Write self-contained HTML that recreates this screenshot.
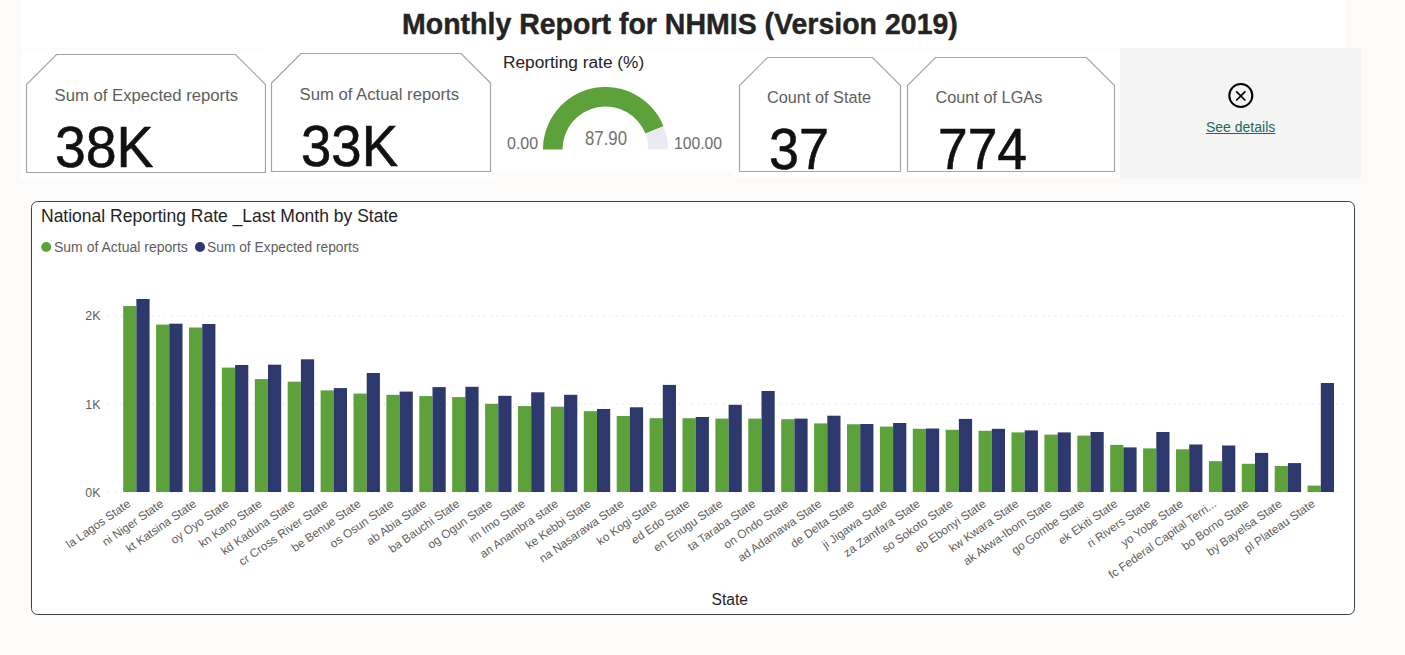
<!DOCTYPE html>
<html><head><meta charset="utf-8"><style>
html,body{margin:0;padding:0;}
body{width:1405px;height:655px;overflow:hidden;background:#fcfbfa;position:relative;font-family:"Liberation Sans",sans-serif;}
.abs{position:absolute;white-space:nowrap;}
</style></head><body>
<div class="abs" style="left:21px;top:0;width:1324px;height:48px;background:#fff"></div>
<div class="abs" style="left:21px;top:49px;width:476px;height:130px;background:#fff"></div>
<div class="abs" style="left:266px;top:48px;width:231px;height:10px;background:#fff"></div>
<div class="abs" style="left:497px;top:49px;width:236px;height:122px;background:#fff"></div>
<div class="abs" style="left:733px;top:49px;width:387px;height:129px;background:#fff"></div>
<div class="abs" style="left:1120px;top:48px;width:241px;height:130.5px;background:#f4f4f4"></div>
<div class="abs" style="left:31px;top:201.2px;width:1321.5px;height:411.8px;background:#fff;border:1px solid #404040;border-radius:6.5px"></div>
<div class="abs" id="title" style="left:402px;top:6px;font-size:28.5px;font-weight:bold;color:#252423;letter-spacing:0px;-webkit-text-stroke:0.4px #252423;transform:scaleY(1.06);transform-origin:0 0">Monthly Report for NHMIS (Version 2019)</div>
<svg class="abs" style="left:0;top:0" width="1405" height="655">
<g fill="#fff" stroke="#a3a3a8" stroke-width="1.2">
<path d="M56.5,54.5 L235.5,54.5 L265.5,84.5 L265.5,172.5 L26.5,172.5 L26.5,84.5 Z"/>
<path d="M301.0,53.5 L461.0,53.5 L490.5,83.0 L490.5,171.5 L271.5,171.5 L271.5,83.0 Z"/>
<path d="M767.5,57.5 L872.5,57.5 L900.5,85.5 L900.5,171.5 L739.5,171.5 L739.5,85.5 Z"/>
<path d="M935.5,57.5 L1086.5,57.5 L1114.5,85.5 L1114.5,171.5 L907.5,171.5 L907.5,85.5 Z"/>
</g>
<path d="M543.00,149.50 A62.5,62.5 0 0 1 663.54,126.31 L645.43,133.55 A43.0,43.0 0 0 0 562.50,149.50 Z" fill="#5ca13a"/>
<path d="M663.54,126.31 A62.5,62.5 0 0 1 668.00,149.50 L648.50,149.50 A43.0,43.0 0 0 0 645.43,133.55 Z" fill="#ebe9f4"/>
<circle cx="1240.8" cy="95.5" r="11.5" fill="none" stroke="#000" stroke-width="2.1"/>
<path d="M1236.2,91.3 L1245.4,100.5 M1245.4,91.3 L1236.2,100.5" stroke="#000" stroke-width="1.7"/>
<line x1="108" y1="315.8" x2="1344" y2="315.8" stroke="#e9e7f4" stroke-width="1.3" stroke-dasharray="1.6 4.67"/><line x1="108" y1="404.2" x2="1344" y2="404.2" stroke="#e9e7f4" stroke-width="1.3" stroke-dasharray="1.6 4.67"/><line x1="108" y1="492.4" x2="1344" y2="492.4" stroke="#e9e7f4" stroke-width="1.3" stroke-dasharray="1.6 4.67"/>
<rect x="123.20" y="306.0" width="13.2" height="186.0" fill="#5ca13a"/><rect x="136.40" y="299.0" width="13.2" height="193.0" fill="#2d386c"/><rect x="156.10" y="324.6" width="13.2" height="167.4" fill="#5ca13a"/><rect x="169.30" y="323.7" width="13.2" height="168.3" fill="#2d386c"/><rect x="189.00" y="327.5" width="13.2" height="164.5" fill="#5ca13a"/><rect x="202.20" y="324.0" width="13.2" height="168.0" fill="#2d386c"/><rect x="221.90" y="367.6" width="13.2" height="124.4" fill="#5ca13a"/><rect x="235.10" y="365.0" width="13.2" height="127.0" fill="#2d386c"/><rect x="254.80" y="379.1" width="13.2" height="112.9" fill="#5ca13a"/><rect x="268.00" y="364.7" width="13.2" height="127.3" fill="#2d386c"/><rect x="287.70" y="381.7" width="13.2" height="110.3" fill="#5ca13a"/><rect x="300.90" y="359.3" width="13.2" height="132.7" fill="#2d386c"/><rect x="320.60" y="390.4" width="13.2" height="101.6" fill="#5ca13a"/><rect x="333.80" y="388.1" width="13.2" height="103.9" fill="#2d386c"/><rect x="353.50" y="393.6" width="13.2" height="98.4" fill="#5ca13a"/><rect x="366.70" y="373.0" width="13.2" height="119.0" fill="#2d386c"/><rect x="386.40" y="394.8" width="13.2" height="97.2" fill="#5ca13a"/><rect x="399.60" y="391.6" width="13.2" height="100.4" fill="#2d386c"/><rect x="419.30" y="396.1" width="13.2" height="95.9" fill="#5ca13a"/><rect x="432.50" y="387.1" width="13.2" height="104.9" fill="#2d386c"/><rect x="452.20" y="397.1" width="13.2" height="94.9" fill="#5ca13a"/><rect x="465.40" y="386.8" width="13.2" height="105.2" fill="#2d386c"/><rect x="485.10" y="403.8" width="13.2" height="88.2" fill="#5ca13a"/><rect x="498.30" y="395.8" width="13.2" height="96.2" fill="#2d386c"/><rect x="518.00" y="406.1" width="13.2" height="85.9" fill="#5ca13a"/><rect x="531.20" y="392.3" width="13.2" height="99.7" fill="#2d386c"/><rect x="550.90" y="406.7" width="13.2" height="85.3" fill="#5ca13a"/><rect x="564.10" y="394.8" width="13.2" height="97.2" fill="#2d386c"/><rect x="583.80" y="411.2" width="13.2" height="80.8" fill="#5ca13a"/><rect x="597.00" y="409.0" width="13.2" height="83.0" fill="#2d386c"/><rect x="616.70" y="416.0" width="13.2" height="76.0" fill="#5ca13a"/><rect x="629.90" y="407.3" width="13.2" height="84.7" fill="#2d386c"/><rect x="649.60" y="418.2" width="13.2" height="73.8" fill="#5ca13a"/><rect x="662.80" y="384.9" width="13.2" height="107.1" fill="#2d386c"/><rect x="682.50" y="418.2" width="13.2" height="73.8" fill="#5ca13a"/><rect x="695.70" y="417.0" width="13.2" height="75.0" fill="#2d386c"/><rect x="715.40" y="418.6" width="13.2" height="73.4" fill="#5ca13a"/><rect x="728.60" y="404.8" width="13.2" height="87.2" fill="#2d386c"/><rect x="748.30" y="418.6" width="13.2" height="73.4" fill="#5ca13a"/><rect x="761.50" y="391.0" width="13.2" height="101.0" fill="#2d386c"/><rect x="781.20" y="419.2" width="13.2" height="72.8" fill="#5ca13a"/><rect x="794.40" y="418.6" width="13.2" height="73.4" fill="#2d386c"/><rect x="814.10" y="423.4" width="13.2" height="68.6" fill="#5ca13a"/><rect x="827.30" y="415.7" width="13.2" height="76.3" fill="#2d386c"/><rect x="847.00" y="424.3" width="13.2" height="67.7" fill="#5ca13a"/><rect x="860.20" y="424.0" width="13.2" height="68.0" fill="#2d386c"/><rect x="879.90" y="426.6" width="13.2" height="65.4" fill="#5ca13a"/><rect x="893.10" y="423.0" width="13.2" height="69.0" fill="#2d386c"/><rect x="912.80" y="428.8" width="13.2" height="63.2" fill="#5ca13a"/><rect x="926.00" y="428.5" width="13.2" height="63.5" fill="#2d386c"/><rect x="945.70" y="429.8" width="13.2" height="62.2" fill="#5ca13a"/><rect x="958.90" y="418.9" width="13.2" height="73.1" fill="#2d386c"/><rect x="978.60" y="430.8" width="13.2" height="61.2" fill="#5ca13a"/><rect x="991.80" y="428.8" width="13.2" height="63.2" fill="#2d386c"/><rect x="1011.50" y="432.4" width="13.2" height="59.6" fill="#5ca13a"/><rect x="1024.70" y="430.4" width="13.2" height="61.6" fill="#2d386c"/><rect x="1044.40" y="434.6" width="13.2" height="57.4" fill="#5ca13a"/><rect x="1057.60" y="432.4" width="13.2" height="59.6" fill="#2d386c"/><rect x="1077.30" y="435.6" width="13.2" height="56.4" fill="#5ca13a"/><rect x="1090.50" y="432.0" width="13.2" height="60.0" fill="#2d386c"/><rect x="1110.20" y="444.9" width="13.2" height="47.1" fill="#5ca13a"/><rect x="1123.40" y="447.4" width="13.2" height="44.6" fill="#2d386c"/><rect x="1143.10" y="448.4" width="13.2" height="43.6" fill="#5ca13a"/><rect x="1156.30" y="432.0" width="13.2" height="60.0" fill="#2d386c"/><rect x="1176.00" y="449.3" width="13.2" height="42.7" fill="#5ca13a"/><rect x="1189.20" y="444.5" width="13.2" height="47.5" fill="#2d386c"/><rect x="1208.90" y="461.2" width="13.2" height="30.8" fill="#5ca13a"/><rect x="1222.10" y="445.5" width="13.2" height="46.5" fill="#2d386c"/><rect x="1241.80" y="463.8" width="13.2" height="28.2" fill="#5ca13a"/><rect x="1255.00" y="452.9" width="13.2" height="39.1" fill="#2d386c"/><rect x="1274.70" y="466.0" width="13.2" height="26.0" fill="#5ca13a"/><rect x="1287.90" y="463.1" width="13.2" height="28.9" fill="#2d386c"/><rect x="1307.60" y="485.6" width="13.2" height="6.4" fill="#5ca13a"/><rect x="1320.80" y="383.0" width="13.2" height="109.0" fill="#2d386c"/>
<g font-family="Liberation Sans" font-size="11.8" fill="#605e5c">
<text x="131.40" y="505.5" text-anchor="end" transform="rotate(-35 131.40 505.5)">la Lagos State</text><text x="164.30" y="505.5" text-anchor="end" transform="rotate(-35 164.30 505.5)">ni Niger State</text><text x="197.20" y="505.5" text-anchor="end" transform="rotate(-35 197.20 505.5)">kt Katsina State</text><text x="230.10" y="505.5" text-anchor="end" transform="rotate(-35 230.10 505.5)">oy Oyo State</text><text x="263.00" y="505.5" text-anchor="end" transform="rotate(-35 263.00 505.5)">kn Kano State</text><text x="295.90" y="505.5" text-anchor="end" transform="rotate(-35 295.90 505.5)">kd Kaduna State</text><text x="328.80" y="505.5" text-anchor="end" transform="rotate(-35 328.80 505.5)">cr Cross River State</text><text x="361.70" y="505.5" text-anchor="end" transform="rotate(-35 361.70 505.5)">be Benue State</text><text x="394.60" y="505.5" text-anchor="end" transform="rotate(-35 394.60 505.5)">os Osun State</text><text x="427.50" y="505.5" text-anchor="end" transform="rotate(-35 427.50 505.5)">ab Abia State</text><text x="460.40" y="505.5" text-anchor="end" transform="rotate(-35 460.40 505.5)">ba Bauchi State</text><text x="493.30" y="505.5" text-anchor="end" transform="rotate(-35 493.30 505.5)">og Ogun State</text><text x="526.20" y="505.5" text-anchor="end" transform="rotate(-35 526.20 505.5)">im Imo State</text><text x="559.10" y="505.5" text-anchor="end" transform="rotate(-35 559.10 505.5)">an Anambra state</text><text x="592.00" y="505.5" text-anchor="end" transform="rotate(-35 592.00 505.5)">ke Kebbi State</text><text x="624.90" y="505.5" text-anchor="end" transform="rotate(-35 624.90 505.5)">na Nasarawa State</text><text x="657.80" y="505.5" text-anchor="end" transform="rotate(-35 657.80 505.5)">ko Kogi State</text><text x="690.70" y="505.5" text-anchor="end" transform="rotate(-35 690.70 505.5)">ed Edo State</text><text x="723.60" y="505.5" text-anchor="end" transform="rotate(-35 723.60 505.5)">en Enugu State</text><text x="756.50" y="505.5" text-anchor="end" transform="rotate(-35 756.50 505.5)">ta Taraba State</text><text x="789.40" y="505.5" text-anchor="end" transform="rotate(-35 789.40 505.5)">on Ondo State</text><text x="822.30" y="505.5" text-anchor="end" transform="rotate(-35 822.30 505.5)">ad Adamawa State</text><text x="855.20" y="505.5" text-anchor="end" transform="rotate(-35 855.20 505.5)">de Delta State</text><text x="888.10" y="505.5" text-anchor="end" transform="rotate(-35 888.10 505.5)">ji Jigawa State</text><text x="921.00" y="505.5" text-anchor="end" transform="rotate(-35 921.00 505.5)">za Zamfara State</text><text x="953.90" y="505.5" text-anchor="end" transform="rotate(-35 953.90 505.5)">so Sokoto State</text><text x="986.80" y="505.5" text-anchor="end" transform="rotate(-35 986.80 505.5)">eb Ebonyi State</text><text x="1019.70" y="505.5" text-anchor="end" transform="rotate(-35 1019.70 505.5)">kw Kwara State</text><text x="1052.60" y="505.5" text-anchor="end" transform="rotate(-35 1052.60 505.5)">ak Akwa-Ibom State</text><text x="1085.50" y="505.5" text-anchor="end" transform="rotate(-35 1085.50 505.5)">go Gombe State</text><text x="1118.40" y="505.5" text-anchor="end" transform="rotate(-35 1118.40 505.5)">ek Ekiti State</text><text x="1151.30" y="505.5" text-anchor="end" transform="rotate(-35 1151.30 505.5)">ri Rivers State</text><text x="1184.20" y="505.5" text-anchor="end" transform="rotate(-35 1184.20 505.5)">yo Yobe State</text><text x="1217.10" y="505.5" text-anchor="end" transform="rotate(-35 1217.10 505.5)">fc Federal Capital Terri...</text><text x="1250.00" y="505.5" text-anchor="end" transform="rotate(-35 1250.00 505.5)">bo Borno State</text><text x="1282.90" y="505.5" text-anchor="end" transform="rotate(-35 1282.90 505.5)">by Bayelsa State</text><text x="1315.80" y="505.5" text-anchor="end" transform="rotate(-35 1315.80 505.5)">pl Plateau State</text>
</g>
<g font-family="Liberation Sans" font-size="12.4" fill="#605e5c" text-anchor="end">
<text x="100.5" y="320.2">2K</text>
<text x="100.5" y="408.6">1K</text>
<text x="100.5" y="496.8">0K</text>
</g>
<circle cx="46.2" cy="247" r="5" fill="#5ca13a"/>
<circle cx="200" cy="247" r="5" fill="#2d386c"/>
</svg>
<div class="abs" style="left:54.5px;top:86px;font-size:16.7px;color:#605e5c">Sum of Expected reports</div>
<div class="abs" style="left:299.5px;top:85px;font-size:16.7px;color:#605e5c">Sum of Actual reports</div>
<div class="abs" style="left:767px;top:88px;font-size:16.3px;color:#605e5c">Count of State</div>
<div class="abs" style="left:935.5px;top:88px;font-size:16.3px;color:#605e5c">Count of LGAs</div>
<div class="abs" style="left:55px;top:113.3px;font-size:58px;color:#111;-webkit-text-stroke:0.6px #111;transform:scaleX(0.955);transform-origin:0 0">38K</div>
<div class="abs" style="left:300.5px;top:112.3px;font-size:58px;color:#111;-webkit-text-stroke:0.6px #111;transform:scaleX(0.94);transform-origin:0 0">33K</div>
<div class="abs" style="left:768.5px;top:115.3px;font-size:58px;color:#111;-webkit-text-stroke:0.6px #111;transform:scaleX(0.93);transform-origin:0 0;height:57px;overflow:hidden">37</div>
<div class="abs" style="left:938px;top:115.3px;font-size:58px;color:#111;-webkit-text-stroke:0.6px #111;transform:scaleX(0.92);transform-origin:0 0;height:57px;overflow:hidden">774</div>
<div class="abs" style="left:503px;top:52px;font-size:17.3px;color:#252423">Reporting rate (%)</div>
<div class="abs" style="left:507px;top:134.3px;font-size:16px;color:#6e6c6a;transform:scaleY(1.06);transform-origin:0 0">0.00</div>
<div class="abs" style="left:674px;top:134.3px;font-size:15.7px;color:#6e6c6a;transform:scaleY(1.06);transform-origin:0 0">100.00</div>
<div class="abs" style="left:585px;top:126.8px;font-size:16.8px;color:#747270;transform:scaleY(1.2);transform-origin:0 0">87.90</div>
<div class="abs" style="left:1206px;top:119px;font-size:14px;color:#1a6b60;text-decoration:underline">See details</div>
<div class="abs" style="left:41px;top:206px;font-size:17.5px;color:#252423">National Reporting Rate _Last Month by State</div>
<div class="abs" style="left:54px;top:239px;font-size:14px;color:#605e5c">Sum of Actual reports</div>
<div class="abs" style="left:207px;top:239.5px;font-size:13.8px;color:#605e5c">Sum of Expected reports</div>
<div class="abs" style="left:711.5px;top:590.8px;font-size:15.6px;color:#252423">State</div>
</body></html>
